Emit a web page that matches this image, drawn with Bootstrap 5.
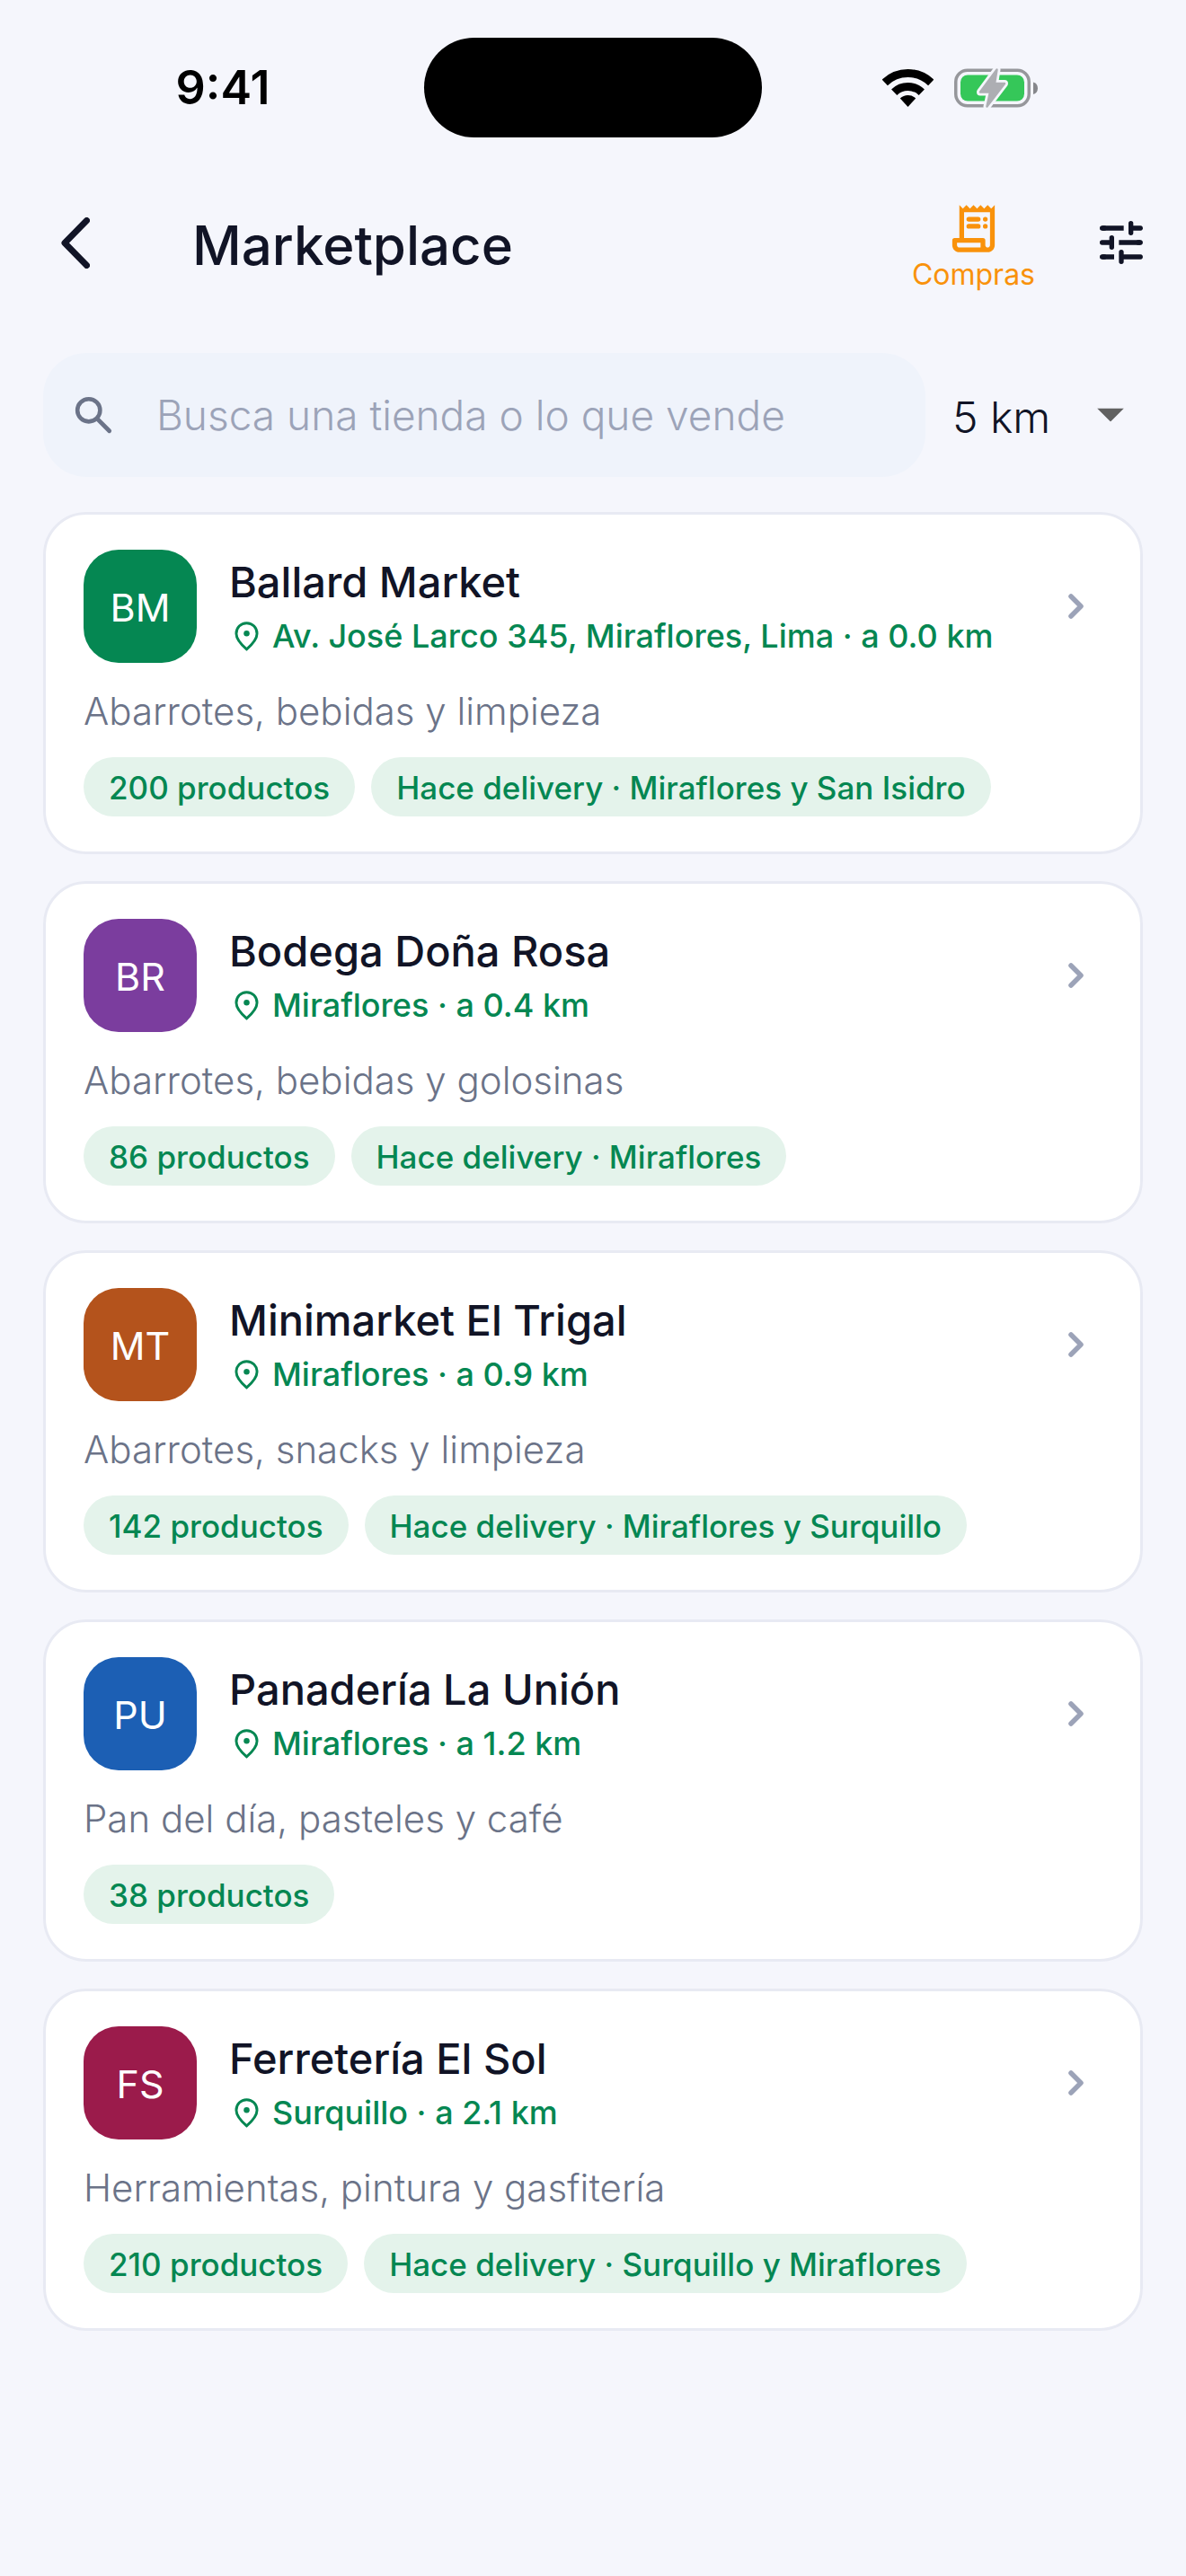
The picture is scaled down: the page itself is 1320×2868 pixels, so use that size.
<!DOCTYPE html>
<html lang="es">
<head>
<meta charset="utf-8">
<meta name="viewport" content="width=device-width, initial-scale=1">
<title>Marketplace</title>
<link href="https://cdn.jsdelivr.net/npm/bootstrap@5.3.0/dist/css/bootstrap.min.css" rel="stylesheet">
<style>
  :root { --ink: #111426; --page: #f5f6fc; --muted: #6b7388; --faint: #9ca3b8; --green: #058752; }
  body { background: var(--page); color: var(--ink); font-family: Inter, "Open Sans", sans-serif; min-height: 100vh; }
  svg { display: block; flex: none; }

  .status-bar { height: 186px; padding-top: 9px; color: #000; }
  .status-time { font-size: 52px; line-height: 60px; font-weight: 600; padding: 0 0 0 24px; }
  .status-icons { gap: 23px; padding-right: 32px; }
  .island { width: 376px; height: 111px; border-radius: 56px; background: #000; }

  .app-bar { height: 168px; padding: 0 40px 0 68px; }
  .back-btn, .tune-btn { color: var(--ink); }
  .app-title { font-size: 60px; line-height: 72px; font-weight: 500; margin: 0 0 0 114px; padding-top: 6px; }
  .purchases { color: #f9920b; font-size: 32px; line-height: 40px; margin-right: 64px; }

  .content { padding: 39px 48px; }
  .search-box { height: 138px; border-radius: 48px; background: #eff3fb; padding: 0 29px; gap: 42px; color: var(--muted); min-width: 0; }
  .search-box .form-control { font-size: 46px; line-height: 60px; font-weight: 300; color: var(--ink); }
  .search-box .form-control::placeholder { color: var(--faint); opacity: 1; }
  .radius-select { width: 242px; }
  .radius-select .form-select { font-size: 48px; line-height: 60px; font-weight: 300; color: var(--ink); background: none; padding: 6px 72px 0 30px; }
  .radius-caret { right: 21px; color: #616161; pointer-events: none; }

  .store-list { gap: 30px; margin-top: 39px; }
  .store { border: 3px solid #e8eaf3; border-radius: 48px; padding: 39px 42px; color: var(--ink); background: #fff; }
  .avatar { width: 126px; height: 126px; border-radius: 39px; color: #fff; font-size: 43px; flex: none; padding-top: 3px; }
  .store-head { gap: 36px; }
  .store-info { padding-top: 3px; min-width: 0; }
  .store-name { font-size: 47px; line-height: 60px; font-weight: 500; margin: 0 0 3px; }
  .store-place { font-size: 36px; line-height: 54px; font-weight: 500; color: var(--green); gap: 9px; }
  .store-desc { font-size: 42px; line-height: 48px; font-weight: 300; color: var(--muted); margin: 30px 0 27px; }
  .store-tags { gap: 18px; }
  .tag { height: 66px; border-radius: 33px; padding: 2px 28px 0; background: #e4f3eb; color: var(--green); font-size: 35px; line-height: 64px; font-weight: 500; }
  .go { color: var(--faint); }
  .c-green { background: #058752; } .c-purple { background: #7b3d9e; } .c-orange { background: #b4531c; }
  .c-blue { background: #1c5fb4; } .c-wine { background: #9b1b4b; }
</style>
</head>
<body>
<svg width="0" height="0" class="position-absolute" aria-hidden="true">
  <symbol id="pin" viewBox="0 0 24 24"><path d="M12 2.900c-4 0-7.100 3.100-7.100 7.200 0 3.200 2.300 6.500 7.100 10.700 4.800-4.200 7.100-7.500 7.100-10.700 0-4.100-3.100-7.200-7.100-7.200z" fill="none" stroke="currentColor" stroke-width="1.800"/><circle cx="12" cy="10" r="2" fill="currentColor"/></symbol>
  <symbol id="go" viewBox="0 0 60 60"><path d="M25 19l11 11-11 11" fill="none" stroke="currentColor" stroke-width="5.500" stroke-linecap="round" stroke-linejoin="round"/></symbol>
</svg>

<div class="status-bar d-flex align-items-center">
  <div class="col"><div class="status-time text-center">9:41</div></div>
  <div class="island"></div>
  <div class="col"><div class="status-icons d-flex justify-content-center align-items-center">
    <svg width="57" height="42" viewBox="0 0 57 42" fill="none" stroke="currentColor" stroke-width="9" aria-label="Wi-Fi"><path d="M2.800 14.900A37 37 0 0 1 54.200 14.900M13.200 25.700A22 22 0 0 1 43.800 25.700"/><path d="M19.800 32.500A12.500 12.500 0 0 1 37.200 32.500L28.500 42z" fill="currentColor" stroke="none"/></svg>
    <svg width="93" height="46" viewBox="0 0 93 46" aria-label="Batería cargando">
      <rect x="1.750" y="3.250" width="81.500" height="39.500" rx="13" fill="none" stroke="#96979b" stroke-width="3.500"/>
      <rect x="7" y="8.500" width="71" height="29" rx="8" fill="#35c759"/>
      <path d="M88 16.500c3.500 1 5 3.500 5 6.750s-1.500 5.750-5 6.750z" fill="#86878b"/>
      <path d="M47.500 2.500L45 18h11L36.500 43.500 40 27.500H29z" fill="#f5f6fc" stroke="#f5f6fc" stroke-width="8" stroke-linejoin="round"/>
      <path d="M47.500 2.500L45 18h11L36.500 43.500 40 27.500H29z" fill="#adaeb3" stroke="#adaeb3" stroke-width="2.500" stroke-linejoin="round"/>
    </svg>
  </div></div>
</div>

<header class="app-bar d-flex align-items-center">
  <button type="button" class="btn p-0 border-0 back-btn" aria-label="Atrás"><svg width="32" height="57" viewBox="0 0 32 57"><path d="M28.500 3.500L4 28.500l24.500 25" fill="none" stroke="currentColor" stroke-width="7" stroke-linecap="round" stroke-linejoin="round"/></svg></button>
  <h1 class="app-title">Marketplace</h1>
  <a href="#" class="purchases ms-auto pt-2 d-flex flex-column align-items-center text-decoration-none">
    <svg width="63" height="63" viewBox="0 0 24 24" fill="currentColor"><path fill-rule="evenodd" d="M19.500 3.500 18 2l-1.500 1.500L15 2l-1.500 1.500L12 2l-1.500 1.500L9 2 7.500 3.500 6 2v14H4a1 1 0 0 0-1 1v2c0 1.660 1.340 3 3 3h12c1.660 0 3-1.340 3-3V2l-1.500 1.500zM15 20H6c-.55 0-1-.45-1-1v-1h10v2zm4-1c0 .55-.45 1-1 1s-1-.45-1-1v-2a1 1 0 0 0-1-1H8V5h11v14z"/><rect x="9" y="7" width="6" height="2" rx="1"/><rect x="9" y="10" width="6" height="2" rx="1"/><circle cx="17" cy="8" r="1"/><circle cx="17" cy="11" r="1"/></svg>
    <span>Compras</span>
  </a>
  <button type="button" class="btn p-0 border-0 tune-btn" aria-label="Filtros"><svg width="64" height="64" viewBox="0 0 24 24" fill="none" stroke="currentColor" stroke-width="2"><path stroke-linecap="round" d="M4 6h1M4 12h4M4 18h1M16 4v4M16 6h4M8 10v4M20 12h-1M12 16v4M12 18h8"/><path d="M4 6h9M11 12h9M4 18h5"/></svg></button>
</header>

<main class="content">
  <form class="d-flex align-items-center">
    <div class="search-box d-flex align-items-center flex-grow-1">
      <svg width="55" height="55" viewBox="0 0 24 24" fill="none" stroke="currentColor" stroke-width="2"><circle cx="9.500" cy="9.500" r="5.500"/><path d="M14 14l5.500 5.500" stroke-linecap="round" stroke-width="2.100"/></svg>
      <input type="search" class="form-control border-0 bg-transparent shadow-none p-0" placeholder="Busca una tienda o lo que vende" aria-label="Busca una tienda o lo que vende">
    </div>
    <div class="radius-select position-relative">
      <select class="form-select border-0 shadow-none" aria-label="Distancia"><option>5 km</option><option>10 km</option></select>
      <svg class="radius-caret position-absolute top-50 translate-middle-y" width="30" height="15" viewBox="0 0 30 15" fill="currentColor"><path d="M0 0h30L15 15z"/></svg>
    </div>
  </form>

  <div class="store-list d-flex flex-column">
    <a href="#" class="card store text-decoration-none">
      <div class="store-head d-flex align-items-center">
        <div class="avatar c-green d-flex align-items-center justify-content-center">BM</div>
        <div class="store-info flex-grow-1">
          <h2 class="store-name">Ballard Market</h2>
          <div class="store-place d-flex align-items-center"><svg width="39" height="39"><use href="#pin"/></svg><span>Av. José Larco 345, Miraflores, Lima · a 0.0 km</span></div>
        </div>
        <svg class="go" width="60" height="60"><use href="#go"/></svg>
      </div>
      <p class="store-desc">Abarrotes, bebidas y limpieza</p>
      <div class="store-tags d-flex"><span class="tag">200 productos</span><span class="tag">Hace delivery · Miraflores y San Isidro</span></div>
    </a>

    <a href="#" class="card store text-decoration-none">
      <div class="store-head d-flex align-items-center">
        <div class="avatar c-purple d-flex align-items-center justify-content-center">BR</div>
        <div class="store-info flex-grow-1">
          <h2 class="store-name">Bodega Doña Rosa</h2>
          <div class="store-place d-flex align-items-center"><svg width="39" height="39"><use href="#pin"/></svg><span>Miraflores · a 0.4 km</span></div>
        </div>
        <svg class="go" width="60" height="60"><use href="#go"/></svg>
      </div>
      <p class="store-desc">Abarrotes, bebidas y golosinas</p>
      <div class="store-tags d-flex"><span class="tag">86 productos</span><span class="tag">Hace delivery · Miraflores</span></div>
    </a>

    <a href="#" class="card store text-decoration-none">
      <div class="store-head d-flex align-items-center">
        <div class="avatar c-orange d-flex align-items-center justify-content-center">MT</div>
        <div class="store-info flex-grow-1">
          <h2 class="store-name">Minimarket El Trigal</h2>
          <div class="store-place d-flex align-items-center"><svg width="39" height="39"><use href="#pin"/></svg><span>Miraflores · a 0.9 km</span></div>
        </div>
        <svg class="go" width="60" height="60"><use href="#go"/></svg>
      </div>
      <p class="store-desc">Abarrotes, snacks y limpieza</p>
      <div class="store-tags d-flex"><span class="tag">142 productos</span><span class="tag">Hace delivery · Miraflores y Surquillo</span></div>
    </a>

    <a href="#" class="card store text-decoration-none">
      <div class="store-head d-flex align-items-center">
        <div class="avatar c-blue d-flex align-items-center justify-content-center">PU</div>
        <div class="store-info flex-grow-1">
          <h2 class="store-name">Panadería La Unión</h2>
          <div class="store-place d-flex align-items-center"><svg width="39" height="39"><use href="#pin"/></svg><span>Miraflores · a 1.2 km</span></div>
        </div>
        <svg class="go" width="60" height="60"><use href="#go"/></svg>
      </div>
      <p class="store-desc">Pan del día, pasteles y café</p>
      <div class="store-tags d-flex"><span class="tag">38 productos</span></div>
    </a>

    <a href="#" class="card store text-decoration-none">
      <div class="store-head d-flex align-items-center">
        <div class="avatar c-wine d-flex align-items-center justify-content-center">FS</div>
        <div class="store-info flex-grow-1">
          <h2 class="store-name">Ferretería El Sol</h2>
          <div class="store-place d-flex align-items-center"><svg width="39" height="39"><use href="#pin"/></svg><span>Surquillo · a 2.1 km</span></div>
        </div>
        <svg class="go" width="60" height="60"><use href="#go"/></svg>
      </div>
      <p class="store-desc">Herramientas, pintura y gasfitería</p>
      <div class="store-tags d-flex"><span class="tag">210 productos</span><span class="tag">Hace delivery · Surquillo y Miraflores</span></div>
    </a>
  </div>
</main>
<script src="https://cdn.jsdelivr.net/npm/bootstrap@5.3.0/dist/js/bootstrap.bundle.min.js"></script>
</body>
</html>
